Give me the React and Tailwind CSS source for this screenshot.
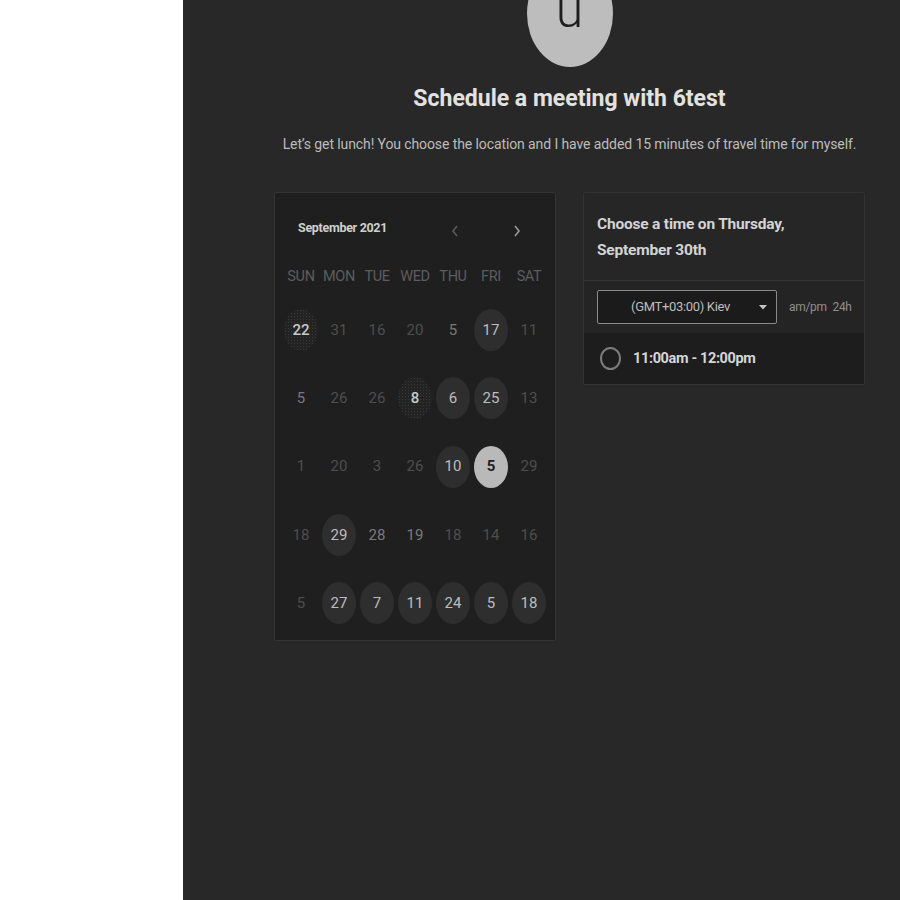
import React from 'react';

const weekdays = ['SUN', 'MON', 'TUE', 'WED', 'THU', 'FRI', 'SAT'];

// kind: d = disabled, m = muted, c = available circle, h = hatched, s = selected
const weeks = [
  [['22', 'h'], ['31', 'd'], ['16', 'd'], ['20', 'd'], ['5', 'm'], ['17', 'c'], ['11', 'd']],
  [['5', 'm'], ['26', 'd'], ['26', 'd'], ['8', 'h'], ['6', 'c'], ['25', 'c'], ['13', 'd']],
  [['1', 'd'], ['20', 'd'], ['3', 'd'], ['26', 'd'], ['10', 'c'], ['5', 's'], ['29', 'd']],
  [['18', 'd'], ['29', 'c'], ['28', 'm'], ['19', 'm'], ['18', 'd'], ['14', 'd'], ['16', 'd']],
  [['5', 'd'], ['27', 'c'], ['7', 'c'], ['11', 'c'], ['24', 'c'], ['5', 'c'], ['18', 'c']],
];

const DayCell = ({ label, kind }) => {
  if (kind === 's') {
    return (
      <div className="flex justify-center">
        <div className="w-[34px] h-[42px] rounded-[50%] bg-[#b9b9b9] flex items-center justify-center text-[15px] font-bold text-[#1f1f1f]">
          {label}
        </div>
      </div>
    );
  }
  if (kind === 'c') {
    return (
      <div className="flex justify-center">
        <div className="w-[34px] h-[42px] rounded-[50%] bg-[#2e2e2e] flex items-center justify-center text-[15px] text-[#bdbdbd]">
          {label}
        </div>
      </div>
    );
  }
  if (kind === 'h') {
    return (
      <div className="flex justify-center">
        <div className="w-[34px] h-[42px] rounded-[50%] bg-[#232323] bg-[radial-gradient(#3a3a3a_1px,transparent_1px)] bg-[length:3px_3px] flex items-center justify-center text-[15px] font-medium text-[#c8c8c8]">
          {label}
        </div>
      </div>
    );
  }
  return (
    <div className="flex justify-center">
      <div
        className={
          'w-[34px] h-[42px] flex items-center justify-center text-[15px] ' +
          (kind === 'm' ? 'text-[#7a7a7a]' : 'text-[#4e4e4e]')
        }
      >
        {label}
      </div>
    </div>
  );
};

const Calendar = () => (
  <div className="w-[282px] h-[449px] bg-[#1f1f1f] border border-[#333] rounded-[2px] px-[7px] shrink-0">
    <div className="flex items-center h-[36px] mt-[17px]">
      <div className="pl-[16px] text-[12.5px] font-bold text-[#cfcfcf] tracking-tight w-[168px]">September 2021</div>
      <svg width="10" height="16" viewBox="0 0 10 16" className="mt-[6px]">
        <path d="M7 3 L3 8 L7 13" fill="none" stroke="#5a5a5a" strokeWidth="1.6" />
      </svg>
      <div className="w-[52px]" />
      <svg width="10" height="16" viewBox="0 0 10 16" className="mt-[6px]">
        <path d="M3 3 L7 8 L3 13" fill="none" stroke="#9a9a9a" strokeWidth="1.6" />
      </svg>
    </div>
    <div className="grid grid-cols-7 mt-[20px] h-[22px] items-center">
      {weekdays.map((d) => (
        <div key={d} className="text-center text-[14.5px] text-[#5d5d5d] tracking-tight">
          {d}
        </div>
      ))}
    </div>
    <div className="flex flex-col mt-[8px]">
      {weeks.map((w, i) => (
        <div key={i} className="grid grid-cols-7 h-[68.3px] items-center">
          {w.map(([label, kind], j) => (
            <DayCell key={j} label={label} kind={kind} />
          ))}
        </div>
      ))}
    </div>
  </div>
);

const TimePanel = () => (
  <div className="w-[282px] bg-[#232323] border border-[#333] rounded-[2px] shrink-0 overflow-hidden">
    <div className="bg-[#262626] border-b border-[#343434] px-[13px] pt-[18px] pb-[17px] text-[15.5px] font-bold leading-[26px] text-[#d4d4d4] tracking-[-0.2px]">
      <div>Choose a time on Thursday,</div>
      <div>September 30th</div>
    </div>
    <div className="flex items-center px-[13px] h-[52px] bg-[#242424]">
      <div className="w-[180px] h-[34px] shrink-0 border border-[#8a8a8a] rounded-[2px] bg-[#1b1b1b] flex items-center">
        <div className="flex-1 text-center text-[13px] text-[#bdbdbd] tracking-tight pl-[4px]">(GMT+03:00) Kiev</div>
        <svg width="8" height="5" viewBox="0 0 8 5" className="mr-[9px]">
          <path d="M0 0 L8 0 L4 4.5 Z" fill="#c4c4c4" />
        </svg>
      </div>
      <div className="ml-[12px] text-[12px] text-[#8f8f8f] tracking-tight whitespace-nowrap">
        am/pm <span className="ml-[3px]">24h</span>
      </div>
    </div>
    <div className="flex items-center h-[51px] bg-[#1d1d1d] px-[16px]">
      <div className="w-[21px] h-[23px] rounded-[50%] border-2 border-[#7c7c7c]" />
      <div className="ml-[12px] text-[14.5px] font-bold text-[#d6d6d6] tracking-tight">11:00am - 12:00pm</div>
    </div>
  </div>
);

export default function App() {
  return (
    <div className="flex min-h-[900px] bg-white font-['Roboto','Liberation_Sans',sans-serif]">
      <div className="w-[183px] shrink-0 bg-white" />
      <main className="flex-1 bg-[#282828] overflow-hidden">
        <div className="w-[591px] ml-[91px] flex flex-col items-center">
          <div className="w-[86px] h-[107px] mt-[-40px] rounded-[50%] bg-[#bdbdbd] flex items-end justify-center pb-[32px]">
            <span className="text-[50px] leading-[50px] font-light text-[#1e1e1e]">u</span>
          </div>
          <h1 className="mt-[17px] h-[30px] leading-[30px] text-[23px] font-bold text-[#e2e2e2]">
            Schedule a meeting with 6test
          </h1>
          <p className="mt-[20px] h-[20px] leading-[20px] text-[14px] text-[#bcbcbc] tracking-[-0.1px] whitespace-nowrap">
            Let’s get lunch! You choose the location and I have added 15 minutes of travel time for myself.
          </p>
          <div className="mt-[38px] w-full flex items-start gap-[27px]">
            <Calendar />
            <TimePanel />
          </div>
        </div>
      </main>
    </div>
  );
}
